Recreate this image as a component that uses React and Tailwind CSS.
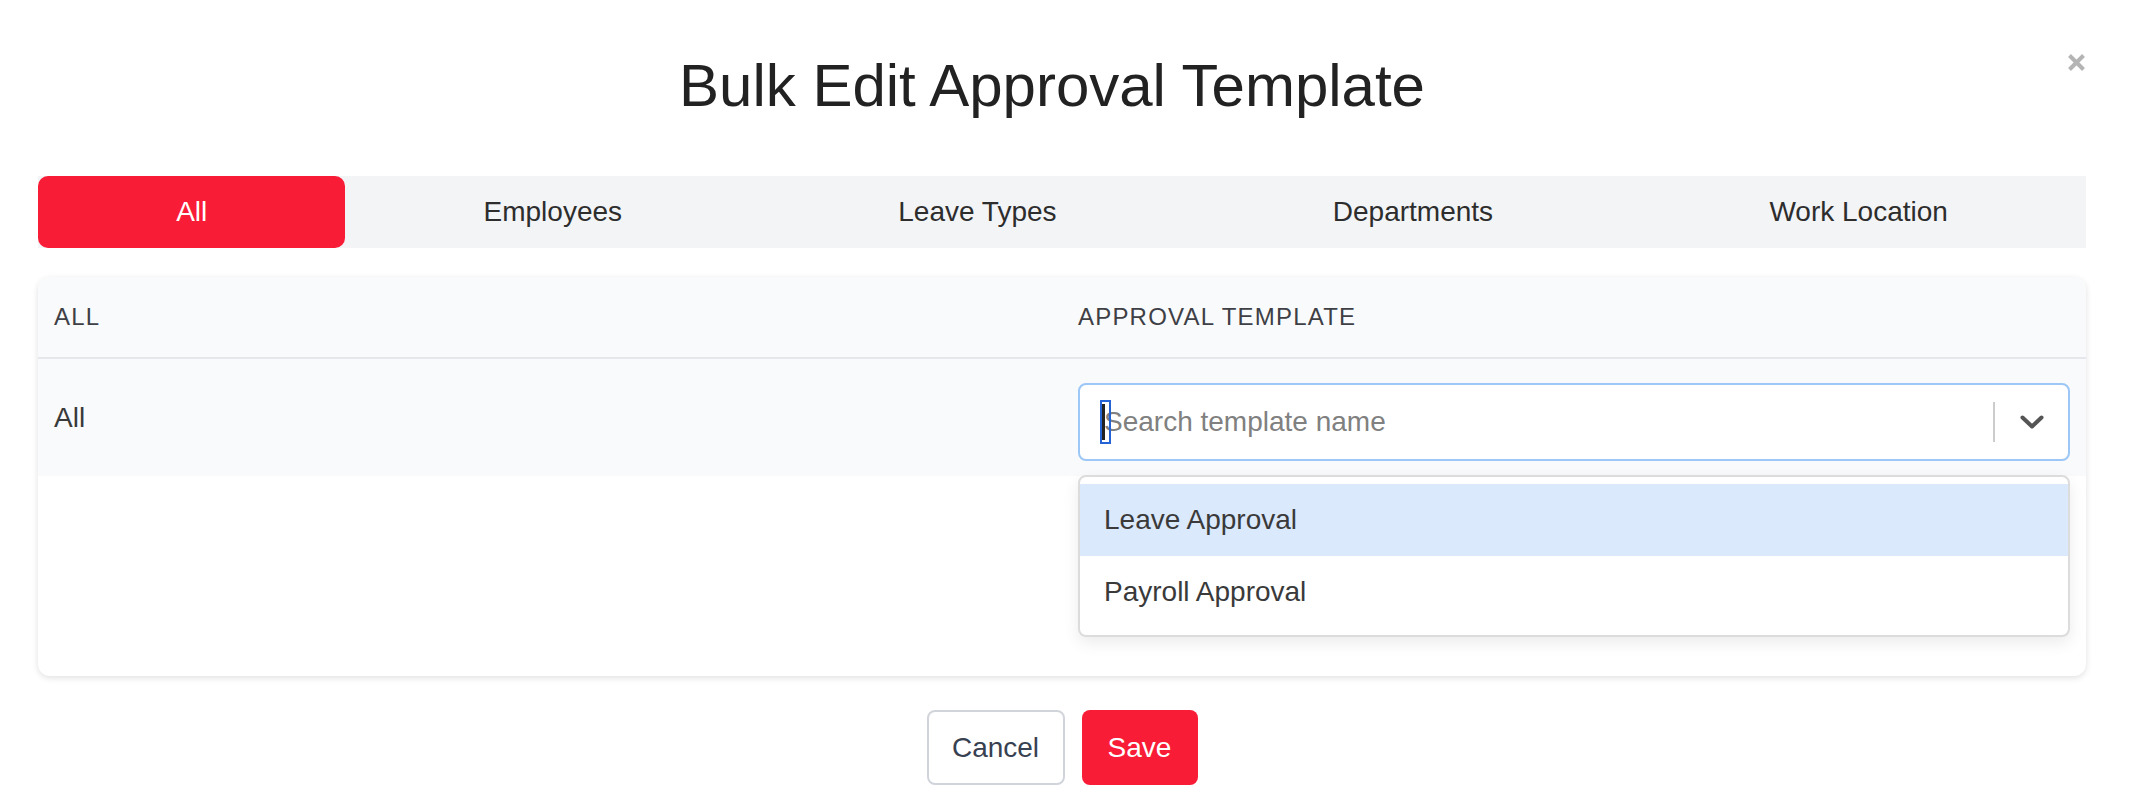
import React from "react";

const font = { fontFamily: '"Liberation Sans", Arial, Helvetica, sans-serif' };

function Tab({ label, active }) {
  return (
    <div
      className={
        "flex-auto flex items-center justify-center px-4 h-full text-[28px] " +
        (active ? "bg-[#f91c37] text-white rounded-[10px]" : "text-[#2d2d2d]")
      }
    >
      {label}
    </div>
  );
}

export default function App() {
  return (
    <div className="relative w-[2134px] h-[799px] bg-white pl-[38px] pr-[48px]" style={font}>
      {/* close */}
      <button className="absolute left-[2066px] top-[52px] w-[21px] h-[21px] flex items-center justify-center">
        <svg width="19" height="19" viewBox="0 0 19 19">
          <path d="M2.5 2.5 L16.5 16.5 M16.5 2.5 L2.5 16.5" stroke="#b4b4b4" strokeWidth="4" strokeLinecap="butt" />
        </svg>
      </button>

      <div className="pt-[56px]">
        <h1 className="text-center pr-[20px] text-[60px] leading-[60px] text-[#222222] font-normal">
          Bulk Edit Approval Template
        </h1>
      </div>

      {/* tabs */}
      <div className="mt-[60px] h-[72px] bg-[#f3f4f6] flex">
        <Tab label="All" active />
        <Tab label="Employees" />
        <Tab label="Leave Types" />
        <Tab label="Departments" />
        <Tab label="Work Location" />
      </div>

      {/* card */}
      <div className="mt-[29px] h-[399px] rounded-[12px] bg-white shadow-[0_2px_6px_rgba(0,0,0,0.12)]">
        <div className="h-[82px] grid grid-cols-2 bg-[#f9fafb] border-b-2 border-[#e5e7eb] rounded-t-[12px]">
          <div className="px-4 flex items-center text-[24px] tracking-wider text-[#3f3f46]">ALL</div>
          <div className="px-4 flex items-center text-[24px] tracking-wider text-[#3f3f46]">APPROVAL TEMPLATE</div>
        </div>
        <div className="h-[117px] grid grid-cols-2 bg-[#f9fafb]">
          <div className="px-4 flex items-center text-[28px] text-[#3a3a3a]">All</div>
          <div className="px-4 pt-[24px]">
            <div className="relative">
              <div className="relative h-[78px] rounded-[8px] border-2 border-[#9cc7f7] bg-white flex items-center">
                <span className="absolute left-[20px] top-[15px] w-[11px] h-[44px] border-2 border-[#2463d6] flex items-center">
                  <span className="block w-[3px] h-[36px] bg-[#222]" />
                </span>
                <span className="flex-1 pl-[24px] text-[28px] text-[#808080]">Search template name</span>
                <span className="w-[2px] h-[40px] bg-[#cccccc]" />
                <span className="w-[73px] flex items-center justify-center">
                  <svg width="24" height="14" viewBox="0 0 24 14">
                    <polyline points="2.5,2.5 12,11.5 21.5,2.5" fill="none" stroke="#555555" strokeWidth="4" strokeLinecap="round" strokeLinejoin="round" />
                  </svg>
                </span>
              </div>
              <div className="absolute left-0 right-0 top-[92px] z-10 rounded-[8px] border-2 border-[#dcdcdc] bg-white py-[7px] shadow-[0_6px_16px_rgba(0,0,0,0.08)]">
                <div className="h-[72px] flex items-center pl-[24px] bg-[#dbe9fc] text-[28px] text-[#3a3a3a]">Leave Approval</div>
                <div className="h-[72px] flex items-center pl-[24px] text-[28px] text-[#3a3a3a]">Payroll Approval</div>
              </div>
            </div>
          </div>
        </div>
      </div>

      {/* buttons */}
      <div className="mt-[34px] flex justify-center gap-[17px]">
        <button className="w-[138px] h-[75px] rounded-[8px] border-2 border-[#d1d5db] bg-white text-[28px] text-[#374151]">
          Cancel
        </button>
        <button className="w-[116px] h-[75px] rounded-[8px] bg-[#f91c37] text-[28px] text-white font-medium">
          Save
        </button>
      </div>
    </div>
  );
}
